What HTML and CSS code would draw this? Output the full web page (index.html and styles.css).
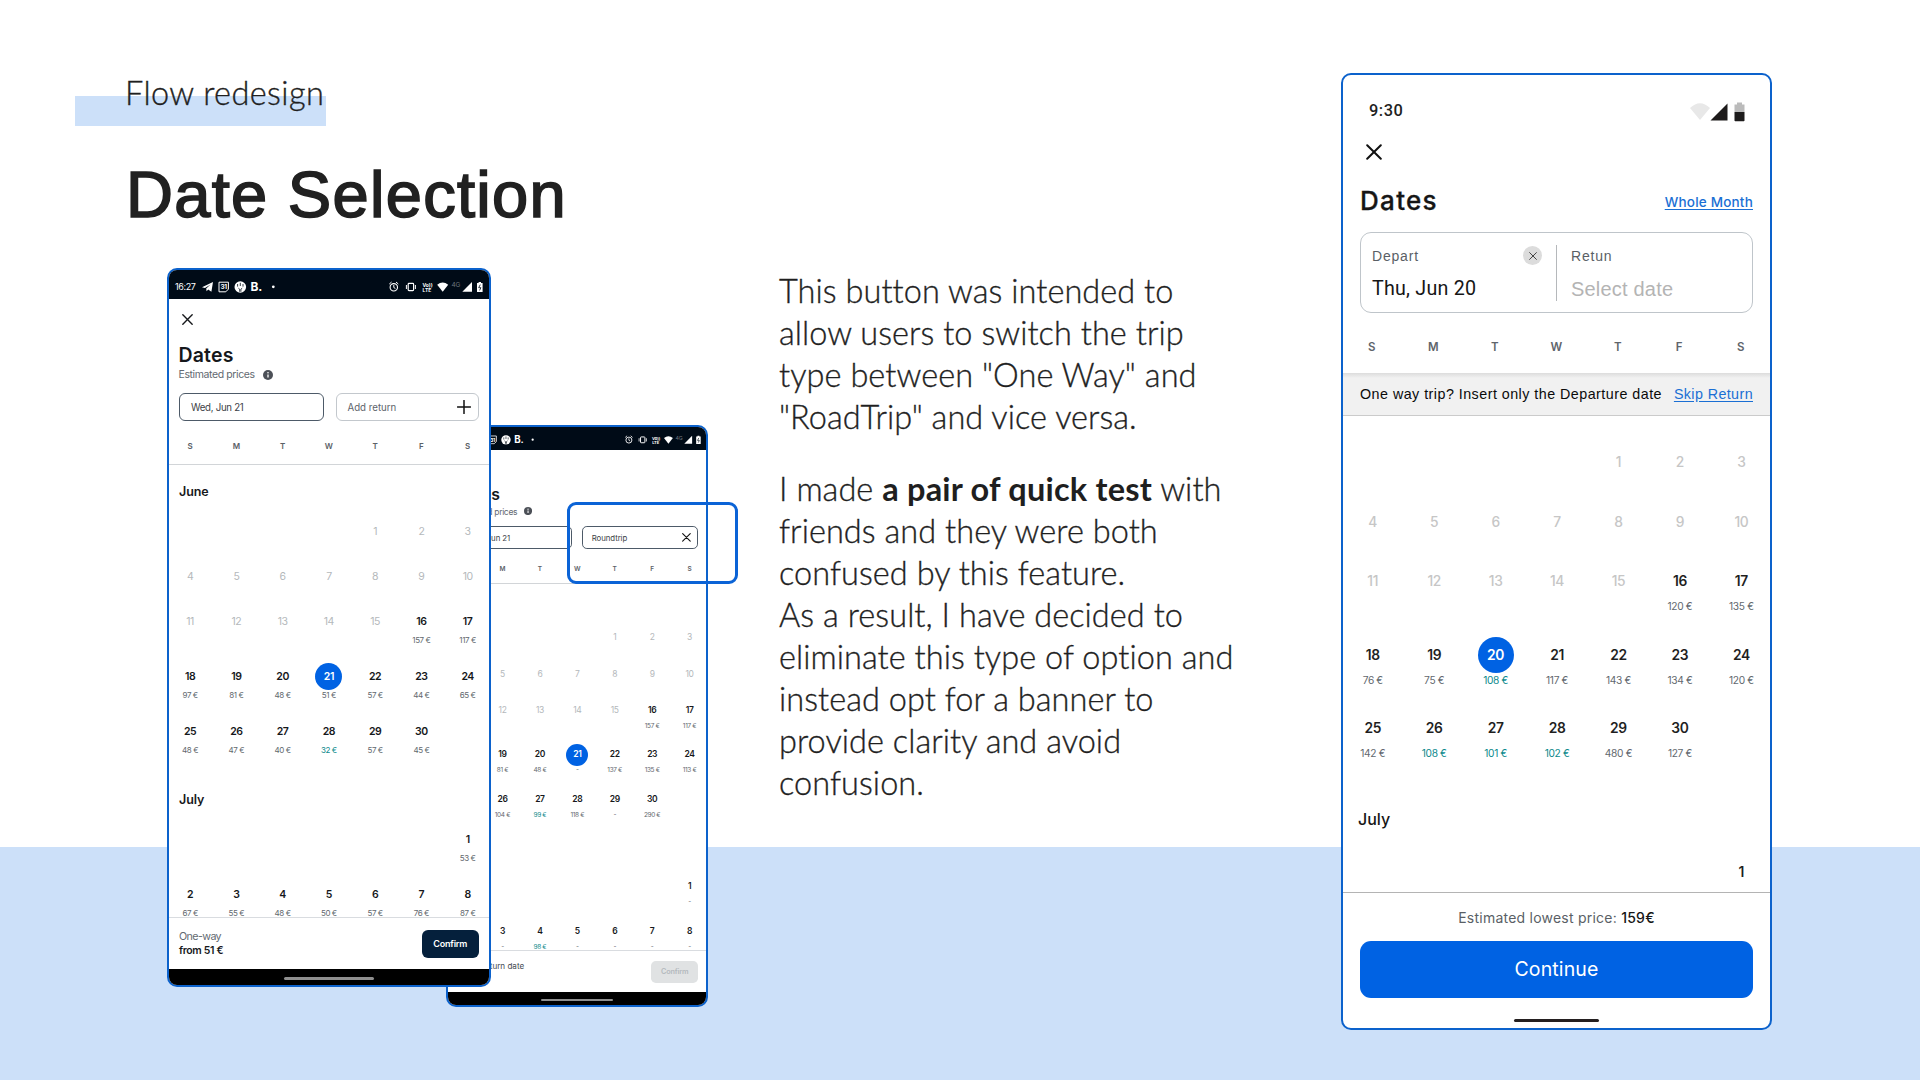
FILE: index.html
```html
<!DOCTYPE html>
<html lang="en">
<head>
<meta charset="utf-8">
<title>Flow redesign – Date Selection</title>
<link rel="stylesheet" href="styles.css">
</head>
<body>
<svg class="sprite" aria-hidden="true">
  <symbol id="i-x" viewBox="0 0 16 16"><path d="M1.2 1.2 14.8 14.8M14.8 1.2 1.2 14.8" fill="none" stroke="currentColor" stroke-width="2" stroke-linecap="round"/></symbol>
  <symbol id="i-plus" viewBox="0 0 14 14"><path d="M7 .5v13M.5 7h13" fill="none" stroke="currentColor" stroke-width="1.5" stroke-linecap="round"/></symbol>
  <symbol id="i-info" viewBox="0 0 10 10"><circle cx="5" cy="5" r="5" fill="#4c5057"/><path d="M5 4.4v3" stroke="#fff" stroke-width="1.3"/><circle cx="5" cy="2.7" r=".8" fill="#fff"/></symbol>
  <symbol id="i-status-left" viewBox="0 0 76 12">
    <path d="M0 6.2 11 1 9.4 10.8 6.2 8.6 4.6 10.2 4.2 7.4 8.6 3.4 3 6.9Z" fill="#fff"/>
    <path d="M17 1.2h9.4v6.9l-2.6 2.7H17Z" fill="none" stroke="#fff" stroke-width="1"/>
    <text x="18.4" y="8.3" class="cal-day">31</text>
    <circle cx="38.3" cy="6" r="5.8" fill="#fff"/>
    <path d="M35.600 3v2.600M38.300 1.800v3.200M41 3v2.600M36.400 7.200l1.300 1v2.600M40.200 7.200l-1.300 1v2.600" stroke="#000c18" stroke-width=".8" fill="none"/>
    <text x="48.5" y="10" class="brand">B.</text>
    <circle cx="71.3" cy="5.8" r="1.4" fill="#fff"/>
  </symbol>
  <symbol id="i-status-right" viewBox="0 0 95 12">
    <g fill="none" stroke="#fff"><circle cx="4.8" cy="6.3" r="3.7" stroke-width="1.1"/><path d="M.3 3 2.6 1M9.3 3 7 1M4.8 4v2.5l1.6 1" stroke-width="1"/>
    <rect x="19.2" y="2.4" width="5.4" height="7.2" rx=".8" stroke-width="1.2"/><path d="M17.4 4v4M26.4 4v4" stroke-width="1"/></g>
    <text x="33.4" y="5.6" class="volte">Vo))</text><text x="33.6" y="11" class="volte">LTE</text>
    <path d="M48.2 3.7Q53.7-.6 59.2 3.7L53.7 10.7Z" fill="#fff"/>
    <text x="62.4" y="6.4" class="net">4G</text>
    <path d="M73.3 10.7 83 1V10.7Z" fill="#fff"/>
    <path d="M88 2h1.6V.9h2.4V2h1.6v9H88Z" fill="#fff"/><path d="M91.3 3.6 89.7 6.7h2.2L90.6 9.4" fill="none" stroke="#000c18" stroke-width=".8"/>
  </symbol>
</svg>

<main class="slide">
  <section class="intro">
    <p class="eyebrow">Flow redesign</p>
    <h1 class="title">Date Selection</h1>

    <div class="stack">
      <article class="phone phone--after">
        <div class="screen">
          <div class="bar"><span>16:27</span><svg class="bar-left"><use href="#i-status-left"/></svg><svg class="bar-right"><use href="#i-status-right"/></svg></div>
          <div class="close"></div>
          <h2 class="heading">Dates</h2>
          <p class="sub">Estimated prices <svg><use href="#i-info"/></svg></p>
          <div class="inputs">
            <div class="input">Wed, Jun 21</div>
            <div class="input">Roundtrip<svg class="cross"><use href="#i-x"/></svg></div>
          </div>
          <div class="week"><b>S</b><b>M</b><b>T</b><b>W</b><b>T</b><b>F</b><b>S</b></div>
          <div class="calendar">
            <h3 class="month"></h3>
            <div class="days off"><i></i><i></i><i></i><i></i><i>1</i><i>2</i><i>3</i></div>
            <div class="days off"><i></i><i>5</i><i>6</i><i>7</i><i>8</i><i>9</i><i>10</i></div>
            <div class="days priced"><i></i><i class="past">12</i><i class="past">13</i><i class="past">14</i><i class="past">15</i><i>16<small>157 €</small></i><i>17<small>117 €</small></i></div>
            <div class="days priced"><i></i><i>19<small>81 €</small></i><i>20<small>48 €</small></i><i class="picked"><em>21</em><small>-</small></i><i>22<small>137 €</small></i><i>23<small>135 €</small></i><i>24<small>113 €</small></i></div>
            <div class="days priced"><i></i><i>26<small>104 €</small></i><i>27<small class="low">99 €</small></i><i>28<small>118 €</small></i><i>29<small>-</small></i><i>30<small>290 €</small></i><i></i></div>
            <h3 class="month"></h3>
            <div class="days priced"><i></i><i></i><i></i><i></i><i></i><i></i><i>1<small>-</small></i></div>
            <div class="days priced"><i></i><i>3<small>-</small></i><i>4<small class="low">98 €</small></i><i>5<small>-</small></i><i>6<small>-</small></i><i>7<small>-</small></i><i>8<small>-</small></i></div>
          </div>
          <div class="footer"><p class="summary single">Select return date</p><span class="confirm disabled">Confirm</span></div>
          <div class="navbar"><span></span></div>
        </div>
      </article>

      <article class="phone phone--before">
        <div class="screen">
          <div class="bar"><span>16:27</span><svg class="bar-left"><use href="#i-status-left"/></svg><svg class="bar-right"><use href="#i-status-right"/></svg></div>
          <div class="close"><svg><use href="#i-x"/></svg></div>
          <h2 class="heading">Dates</h2>
          <p class="sub">Estimated prices <svg><use href="#i-info"/></svg></p>
          <div class="inputs">
            <div class="input wed">Wed, Jun 21</div>
            <div class="input empty">Add return<svg class="plus"><use href="#i-plus"/></svg></div>
          </div>
          <div class="week"><b>S</b><b>M</b><b>T</b><b>W</b><b>T</b><b>F</b><b>S</b></div>
          <div class="calendar">
            <h3 class="month">June</h3>
            <div class="days off"><i></i><i></i><i></i><i></i><i>1</i><i>2</i><i>3</i></div>
            <div class="days off"><i>4</i><i>5</i><i>6</i><i>7</i><i>8</i><i>9</i><i>10</i></div>
            <div class="days priced"><i class="past">11</i><i class="past">12</i><i class="past">13</i><i class="past">14</i><i class="past">15</i><i>16<small>157 €</small></i><i>17<small>117 €</small></i></div>
            <div class="days priced"><i>18<small>97 €</small></i><i>19<small>81 €</small></i><i>20<small>48 €</small></i><i class="picked"><em>21</em><small>51 €</small></i><i>22<small>57 €</small></i><i>23<small>44 €</small></i><i>24<small>65 €</small></i></div>
            <div class="days priced"><i>25<small>48 €</small></i><i>26<small>47 €</small></i><i>27<small>40 €</small></i><i>28<small class="low">32 €</small></i><i>29<small>57 €</small></i><i>30<small>45 €</small></i><i></i></div>
            <h3 class="month">July</h3>
            <div class="days priced"><i></i><i></i><i></i><i></i><i></i><i></i><i>1<small>53 €</small></i></div>
            <div class="days priced"><i>2<small>67 €</small></i><i>3<small>55 €</small></i><i>4<small>48 €</small></i><i>5<small>50 €</small></i><i>6<small>57 €</small></i><i>7<small>76 €</small></i><i>8<small>87 €</small></i></div>
          </div>
          <div class="footer"><p class="summary">One-way<strong>from 51 €</strong></p><span class="confirm">Confirm</span></div>
          <div class="navbar"><span></span></div>
        </div>
      </article>
      <div class="highlight"></div>
    </div>
  </section>

  <section class="copy">
    <p>This button was intended to<br>allow users to switch the trip<br>type between "One Way" and<br>"RoadTrip" and vice versa.</p>
    <p>I made <strong>a pair of quick test</strong> with<br>friends and they were both<br>confused by this feature.<br>As a result, I have decided to<br>eliminate this type of option and<br>instead opt for a banner to<br>provide clarity and avoid<br>confusion.</p>
  </section>

  <article class="phone redesign">
    <div class="rd-status">
      <span>9:30</span>
      <svg viewBox="0 0 56 20" width="56" height="20">
        <path d="M0 6Q10-3.400 20 6L10 18Z" fill="#e8e8e8"/>
        <path d="M20.500 18.500 37.500 1.500V18.500Z" fill="#1d1b1b"/>
        <path d="M44.500 2.500H47V.5h5v2h2.500V10h-10Z" fill="#bbb"/>
        <path d="M44.500 10h10v8.500q0 .7-.7.700h-8.600q-.7 0-.7-.7Z" fill="#1d1b1b"/>
      </svg>
    </div>
    <div class="rd-close"><svg><use href="#i-x"/></svg></div>
    <div class="rd-title"><h2>Dates</h2><a>Whole Month</a></div>
    <div class="rd-field">
      <div class="rd-half depart"><label>Depart</label><span class="clear"><svg><use href="#i-x"/></svg></span><output>Thu, Jun 20</output></div>
      <div class="rd-half"><label>Retun</label><output class="placeholder">Select date</output></div>
    </div>
    <div class="rd-week"><b>S</b><b>M</b><b>T</b><b>W</b><b>T</b><b>F</b><b>S</b></div>
    <div class="banner"><span>One way trip? Insert only the Departure date</span><a>Skip Return</a></div>
    <div class="rd-calendar">
      <div class="days off"><i></i><i></i><i></i><i></i><i>1</i><i>2</i><i>3</i></div>
      <div class="days off"><i>4</i><i>5</i><i>6</i><i>7</i><i>8</i><i>9</i><i>10</i></div>
      <div class="days priced"><i class="past">11</i><i class="past">12</i><i class="past">13</i><i class="past">14</i><i class="past">15</i><i>16<small>120 €</small></i><i>17<small>135 €</small></i></div>
      <div class="days priced"><i>18<small>76 €</small></i><i>19<small>75 €</small></i><i class="picked"><em>20</em><small class="low">108 €</small></i><i>21<small>117 €</small></i><i>22<small>143 €</small></i><i>23<small>134 €</small></i><i>24<small>120 €</small></i></div>
      <div class="days priced"><i>25<small>142 €</small></i><i>26<small class="low">108 €</small></i><i>27<small class="low">101 €</small></i><i>28<small class="low">102 €</small></i><i>29<small>480 €</small></i><i>30<small>127 €</small></i><i></i></div>
      <h3>July</h3>
      <div class="days"><i></i><i></i><i></i><i></i><i></i><i></i><i>1</i></div>
    </div>
    <div class="rd-footer">
      <p>Estimated lowest price: <strong>159€</strong></p>
      <div class="continue">Continue</div>
      <span class="handle"></span>
    </div>
  </article>
</main>
</body>
</html>
```

FILE: styles.css
```css
* { box-sizing: border-box; }

body { margin: 0; background: #fff; }
p, h1, h2, h3 { margin: 0; }
i, em { font-style: normal; }
svg { display: block; flex: none; }
.sprite { display: none; }

.slide {
  display: flex;
  align-items: flex-start;
  width: 1920px;
  height: 1080px;
  overflow: hidden;
  color: #1f1f1f;
  background: linear-gradient(#fff 847px, #cce0f9 847px);
  white-space: nowrap;
}

/* ---- left column ---- */
.intro { width: 779px; padding: 78px 0 0 75px; }

.eyebrow {
  width: 251px;
  height: 48px;
  padding-left: 50px;
  font: 300 32.5px/29px Lato, sans-serif;
  letter-spacing: .4px;
  -webkit-text-stroke: .35px #1f1f1f;
  background: linear-gradient(transparent 18px, #cce0f9 18px);
}

.title {
  margin: 33px 0 37px 51px;
  font: 400 65px/72px "Liberation Sans", sans-serif;
  letter-spacing: 1.3px;
  color: #212121;
  -webkit-text-stroke: 1.7px #212121;
}

.stack { position: relative; width: 664px; height: 740px; }

.phone {
  overflow: hidden;
  background: #fff;
  border: 2px solid #0c62cc;
  border-radius: 10px;
  font-family: Inter, sans-serif;
}

.phone--before {
  position: absolute;
  left: 92px;
  top: 0;
  width: 324px;
  height: 719px;
}

.phone--after {
  position: absolute;
  left: 371px;
  top: 157px;
  width: 262px;
  height: 582px;
}
.phone--after .screen { width: 319px; zoom: .809; }

.highlight {
  position: absolute;
  left: 492px;
  top: 234px;
  width: 171px;
  height: 82px;
  border: 3px solid #0b63d6;
  border-radius: 9px;
}

.screen {
  display: flex;
  flex-direction: column;
  width: 320px;
  height: 715px;
  color: #16181b;
}

.bar {
  display: flex;
  align-items: center;
  height: 29px;
  padding: 4px 5px 0 6px;
  background: #000b17;
  color: #fff;
  font-size: 9px;
  letter-spacing: -.4px;
}
.bar span { width: 27px; }
.bar-left { width: 76px; height: 12px; }
.bar-right { width: 95px; height: 12px; margin-left: auto; }
.cal-day { font: 700 6.500px Inter, sans-serif; letter-spacing: -.3px; fill: #fff; }
.brand { font: 700 12px Inter, sans-serif; letter-spacing: -.3px; fill: #fff; }
.volte { font: 700 5px Inter, sans-serif; letter-spacing: 0; fill: #fff; }
.net { font: 400 6.500px Inter, sans-serif; letter-spacing: 0; fill: #6d747c; }

.close { display: flex; align-items: center; height: 42px; padding: 0 0 1px 13px; }
.close svg { width: 11px; height: 11px; }

.heading { height: 26px; padding-left: 9.5px; font-size: 19.5px; line-height: 28px; font-weight: 600; letter-spacing: .16px; }
.sub {
  display: flex;
  align-items: center;
  gap: 8px;
  height: 15px;
  padding-left: 9.5px;
  font-size: 10.5px;
  letter-spacing: -.4px;
  color: #626971;
}
.sub svg { width: 10px; height: 10px; }

.inputs { display: flex; gap: 12px; height: 28.5px; margin: 10.500px 10px 0; }
.input {
  display: flex;
  align-items: center;
  justify-content: space-between;
  flex: 1;
  padding: 2px 8px 0 11px;
  border: 1px solid #4d5a68;
  border-radius: 6px;
  font-size: 9.700px;
  letter-spacing: -.1px;
  color: #3d4247;
}
.input.wed { letter-spacing: -.3px; }
.input.empty { padding-right: 7px; border-color: #c3c8cd; color: #5c636a; letter-spacing: 0; }
.input .plus { width: 14px; height: 14px; margin-top: -2px; color: #111; }
.input .cross { width: 11px; height: 11px; margin-top: -3px; color: #111; }

.week, .days { display: grid; grid-template-columns: repeat(7, 46.25px); margin-left: -2px; text-align: center; }
.week {
  height: 43.500px;
  padding-left: 2px;
  margin-left: 0;
  border-bottom: 1px solid #d2d5d8;
  font-size: 8px;
  line-height: 50px;
  color: #5b6167;
}
.week b { font-weight: 600; margin-left: -4px; margin-right: 4px; }

.calendar { flex: 1; min-height: 0; overflow: hidden; }
.month { height: 53px; padding-left: 10px; font-size: 12.500px; line-height: 53px; font-weight: 600; letter-spacing: -.1px; }

.days { height: 45px; }
.days.priced { height: 55px; }
.days i {
  display: flex;
  flex-direction: column;
  align-items: center;
  font-size: 10.500px;
  line-height: 27px;
  font-weight: 600;
  letter-spacing: -.45px;
}
.days.off i, .days .past { font-weight: 400; color: #b4b8bb; }
.days em { width: 27px; height: 27px; border-radius: 50%; background: #0062e3; color: #fff; }
.days small { font-size: 8px; line-height: 11px; font-weight: 400; letter-spacing: -.42px; color: #62686e; }
.days small.low { color: #0d8a8c; }

.footer {
  position: relative;
  display: flex;
  justify-content: space-between;
  height: 52px;
  padding: 12px 10px 0 10px;
  border-top: 1px solid #d9dce0;
}
.summary { display: flex; flex-direction: column; font-size: 10.700px; line-height: 14px; letter-spacing: -.6px; color: #626971; }
.summary.single { letter-spacing: 0; font-size: 10px; color: #454b52; }
.summary strong { font-size: 10.500px; font-weight: 600; letter-spacing: -.35px; color: #16181b; }
.confirm {
  width: 57.5px;
  height: 27.5px;
  border-radius: 6px;
  background: #05203c;
  color: #fff;
  text-align: center;
  font-size: 9px;
  line-height: 27.5px;
  font-weight: 600;
  letter-spacing: -.2px;
}
.confirm.disabled { background: #e0e2e3; color: #b4b9bd; }
.navbar { display: flex; align-items: center; justify-content: center; height: 16px; padding-top: 2px; background: #000; }
.navbar span { width: 90px; height: 3px; border-radius: 2px; background: #8f8f8f; }

/* ---- explanation ---- */
.copy {
  display: flex;
  flex-direction: column;
  gap: 29.500px;
  width: 562px;
  padding-top: 270px;
  font: 300 32.5px/42px Lato, sans-serif;
  letter-spacing: .05px;
  -webkit-text-stroke: .35px #1f1f1f;
}
.copy strong { font-weight: 700; letter-spacing: .2px; -webkit-text-stroke: 0; }

/* ---- redesigned screen ---- */
.redesign { display: flex; flex-direction: column; width: 431px; height: 957px; margin-top: 73px; }

.rd-status { display: flex; justify-content: space-between; height: 54px; padding: 27px 24px 0 26px; }
.rd-status span { font: 500 16.400px/18px Roboto, sans-serif; letter-spacing: .5px; }
.rd-close { display: flex; align-items: center; height: 47px; padding: 0 0 1px 23px; color: #111; }
.rd-close svg { width: 16px; height: 16px; }

.rd-title { display: flex; justify-content: space-between; height: 49px; padding: 0 17px; line-height: 49px; }
.rd-title h2 { font-size: 26px; font-weight: 500; letter-spacing: 1.3px; color: #161616; -webkit-text-stroke: .3px #161616; }
.rd-title a { padding-top: 2px; font-size: 13.500px; font-weight: 500; letter-spacing: .2px; }
.redesign a { color: #1a6fd4; text-decoration: underline; text-underline-offset: 2px; }

.rd-field {
  display: flex;
  height: 81px;
  margin: 7px 17px 0;
  padding: 12px 0 11px;
  border: 1px solid #bfc5ca;
  border-radius: 11px;
  font-family: "Liberation Sans", sans-serif;
}
.rd-half { display: grid; grid-template-columns: 1fr auto; align-content: start; flex: 1; padding-left: 14px; }
.rd-half.depart { flex: none; width: 196px; padding-left: 11px; padding-right: 14px; border-right: 1.500px solid #b5b8bb; }
.rd-half label { font-size: 14px; line-height: 22px; letter-spacing: .8px; color: #5a5f66; }
.rd-half output { grid-column: 1 / -1; padding-top: 7px; font: 400 19.700px/30px Roboto, sans-serif; letter-spacing: .22px; color: #161616; }
.rd-half output.placeholder { font: 400 20px/30px "Liberation Sans", sans-serif; letter-spacing: .2px; color: #b4b4b4; }
.clear { display: grid; place-items: center; width: 19px; height: 19px; margin-top: 1px; border-radius: 50%; background: #dcdcdc; color: #444; }
.clear svg { width: 8px; height: 8px; }

.rd-week {
  display: grid;
  grid-template-columns: repeat(7, 61.500px);
  height: 60px;
  margin-left: -2px;
  text-align: center;
  font-size: 11.500px;
  line-height: 69px;
  color: #5f656b;
}
.rd-week b { font-weight: 600; }

.banner {
  display: flex;
  justify-content: space-between;
  height: 43px;
  padding: 0 17px;
  border-bottom: 1.500px solid #cbcbcb;
  background: linear-gradient(#dcdcdc, #f1f1f1 5px);
  font: 400 14.3px/43px "Liberation Sans", sans-serif;
  color: #0a0a0a;
}
.banner span { letter-spacing: .47px; }
.banner a { letter-spacing: .4px; }

.rd-calendar { flex: 1; min-height: 0; overflow: hidden; padding-top: 28px; }
.rd-calendar .days { grid-template-columns: repeat(7, 61.450px); height: 59.7px; margin-left: -1px; }
.rd-calendar .days.priced { height: 73.2px; }
.rd-calendar .days i { font-size: 13.800px; line-height: 36px; letter-spacing: -.35px; }
.rd-calendar .days.off i, .rd-calendar .past { font-weight: 500; color: #c6c6c6; }
.rd-calendar em { width: 36px; height: 36px; }
.rd-calendar small { font-size: 10.200px; line-height: 14px; letter-spacing: -.35px; color: #62686e; }
.rd-calendar h3 { height: 71px; padding-left: 15px; font-size: 16px; line-height: 72px; font-weight: 500; color: #161616; }

.rd-footer { display: flex; flex-direction: column; align-items: center; height: 136px; padding-top: 15px; border-top: 1.500px solid #b4b4b4; }
.rd-footer p { font-size: 14px; line-height: 20px; letter-spacing: .23px; color: #5a5f66; }
.rd-footer strong { font-weight: 500; color: #161616; }
.continue {
  width: 393px;
  height: 57px;
  margin-top: 13px;
  border-radius: 11px;
  background: #0062e3;
  color: #fff;
  text-align: center;
  font: 400 19.500px/57px Inter, sans-serif;
  letter-spacing: .13px;
}
.handle { width: 85px; height: 3px; margin-top: 21px; border-radius: 2px; background: #241f20; }
```
